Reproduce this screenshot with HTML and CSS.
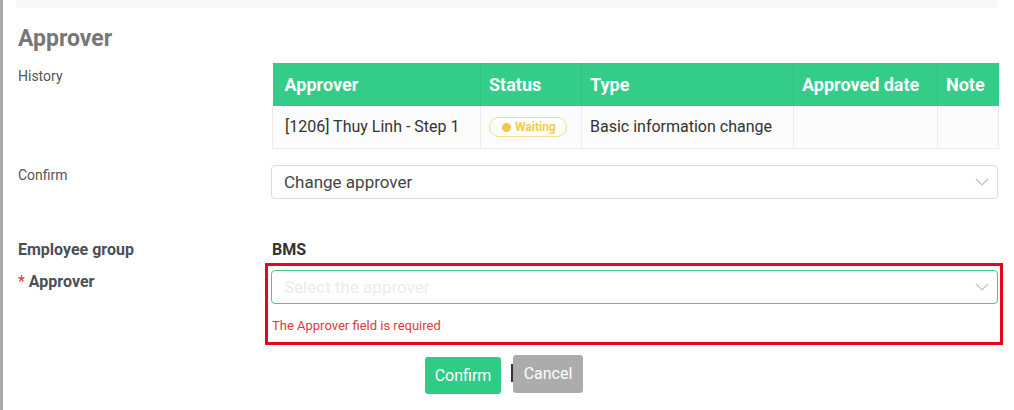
FILE: index.html
```html
<!DOCTYPE html>
<html>
<head>
<meta charset="utf-8">
<link rel="stylesheet" href="styles.css">
</head>
<body>
<div class="frame">
  <div class="topstrip"></div>
  <h2 class="title">Approver</h2>
  <div class="row row-history">
    <div class="label">History</div>
    <div class="field">
      <table class="hist">
        <colgroup>
          <col class="c1"><col class="c2"><col class="c3"><col class="c4"><col class="c5">
        </colgroup>
        <thead>
          <tr><th>Approver</th><th>Status</th><th>Type</th><th>Approved date</th><th>Note</th></tr>
        </thead>
        <tbody>
          <tr>
            <td>[1206] Thuy Linh - Step 1</td>
            <td><span class="badge"><span class="dot"></span>Waiting</span></td>
            <td>Basic information change</td>
            <td></td>
            <td></td>
          </tr>
        </tbody>
      </table>
    </div>
  </div>
  <div class="row row-confirm">
    <div class="label">Confirm</div>
    <div class="field">
      <div class="select">
        <span class="value">Change approver</span>
        <svg class="chev" width="14" height="8" viewBox="0 0 14 8"><path d="M1 1l6 6 6-6" fill="none" stroke="#c0c0c0" stroke-width="1.2"/></svg>
      </div>
    </div>
  </div>
  <div class="row row-group">
    <div class="label strong">Employee group</div>
    <div class="field strong dark">BMS</div>
  </div>
  <div class="row row-approver">
    <div class="label strong"><span class="req">*</span> Approver</div>
    <div class="field">
      <div class="invalid">
        <div class="select green">
          <span class="placeholder">Select the approver</span>
          <svg class="chev" width="14" height="8" viewBox="0 0 14 8"><path d="M1 1l6 6 6-6" fill="none" stroke="#c0c0c0" stroke-width="1.2"/></svg>
        </div>
        <div class="error">The Approver field is required</div>
      </div>
    </div>
  </div>
  <div class="actions">
    <button class="btn btn-confirm">Confirm</button>
    <span class="caret"></span>
    <button class="btn btn-cancel">Cancel</button>
  </div>
</div>
</body>
</html>
```

FILE: styles.css
```css
html, body {
  margin: 0;
  padding: 0;
  background: #fff;
}
body {
  font-family: Roboto, "Liberation Sans", Arial, sans-serif;
  width: 1014px;
  height: 410px;
  overflow: hidden;
}
.frame {
  height: 410px;
  border-left: 3px solid #a9a9a9;
  box-sizing: border-box;
  padding: 0 16px 0 15px;
}
.topstrip {
  height: 8px;
  background: #f8f8f8;
  margin-left: -2px;
}
.title {
  margin: 18px 0 0 0;
  font-size: 23px;
  line-height: 26px;
  font-weight: 700;
  color: #777;
}
.row {
  display: grid;
  grid-template-columns: 254px 1fr;
}
.label {
  font-size: 14px;
  color: #555;
  line-height: 16px;
}
.label.strong {
  font-size: 16px;
  font-weight: 700;
  color: #4c4f57;
  line-height: 18px;
}
.row-history {
  margin-top: 11px;
}
.row-history .label {
  padding-top: 5px;
}
.hist {
  width: 726px;
  border-collapse: collapse;
  table-layout: fixed;
}
.hist .c1 { width: 208px; }
.hist .c2 { width: 101px; }
.hist .c3 { width: 212px; }
.hist .c4 { width: 144px; }
.hist .c5 { width: 61px; }
.hist th {
  background: #33cc88;
  color: #fff;
  font-size: 18px;
  font-weight: 700;
  text-align: left;
  height: 43px;
  padding: 0 0 0 8px;
  box-sizing: border-box;
  border-left: 1px solid #2fbf7e;
  white-space: nowrap;
  overflow: hidden;
}
.hist th:first-child {
  padding-left: 12px;
  border-left: none;
}
.hist td {
  background: #fcfcfc;
  font-size: 16px;
  color: #333;
  height: 42px;
  padding: 0 0 0 8px;
  box-sizing: border-box;
  border: 1px solid #ececec;
  border-top: none;
  white-space: nowrap;
}
.hist td:first-child {
  padding-left: 12px;
}
.badge {
  display: inline-flex;
  align-items: center;
  gap: 4px;
  height: 18px;
  padding: 0 10px 0 12px;
  border: 1px solid #f6d98a;
  border-radius: 10px;
  font-size: 12px;
  font-weight: 700;
  color: #f4c94e;
  background: #fff;
  vertical-align: middle;
}
.badge .dot {
  width: 9px;
  height: 9px;
  border-radius: 50%;
  background: #f4c54a;
}
.row-confirm {
  margin-top: 16px;
}
.row-confirm .label {
  padding-top: 2px;
}
.select {
  height: 34px;
  box-sizing: border-box;
  border: 1px solid #dcdcdc;
  border-radius: 4px;
  display: flex;
  align-items: center;
  justify-content: space-between;
  padding: 0 8px 0 12px;
  margin-left: -1px;
  background: #fff;
}
.select .value {
  font-size: 17px;
  color: #444;
}
.select .placeholder {
  font-size: 17px;
  color: #ececec;
}
.select.green {
  border-color: #48c98d;
}
.chev {
  display: block;
}
.row-group {
  margin-top: 42px;
}
.field.strong {
  font-size: 16px;
  font-weight: 700;
  line-height: 18px;
}
.field.dark {
  color: #333;
}
.row-approver {
  margin-top: 2px;
}
.row-approver .label {
  padding-top: 12px;
}
.req {
  color: #e0383e;
  font-weight: 400;
}
.invalid {
  position: relative;
  margin-top: 9px;
}
.invalid::before {
  content: "";
  position: absolute;
  top: -7px;
  left: -7px;
  right: -5px;
  bottom: -12px;
  border: 3px solid #e4051f;
  pointer-events: none;
}
.error {
  margin-top: 14px;
  font-size: 13px;
  line-height: 15px;
  color: #e0383e;
}
.actions {
  display: flex;
  align-items: flex-start;
  margin-top: 22px;
  padding-left: 407px;
}
.btn {
  border: none;
  font-family: Roboto, "Liberation Sans", Arial, sans-serif;
  font-size: 16px;
  color: #fff;
  border-radius: 3px;
  padding: 0;
  cursor: pointer;
}
.btn-confirm {
  width: 76px;
  height: 37px;
  margin-top: 2px;
  background: #2ecc87;
}
.caret {
  width: 2px;
  height: 18px;
  background: #333;
  margin: 9px 0 0 10px;
}
.btn-cancel {
  width: 70px;
  height: 38px;
  background: #acacac;
}
```
